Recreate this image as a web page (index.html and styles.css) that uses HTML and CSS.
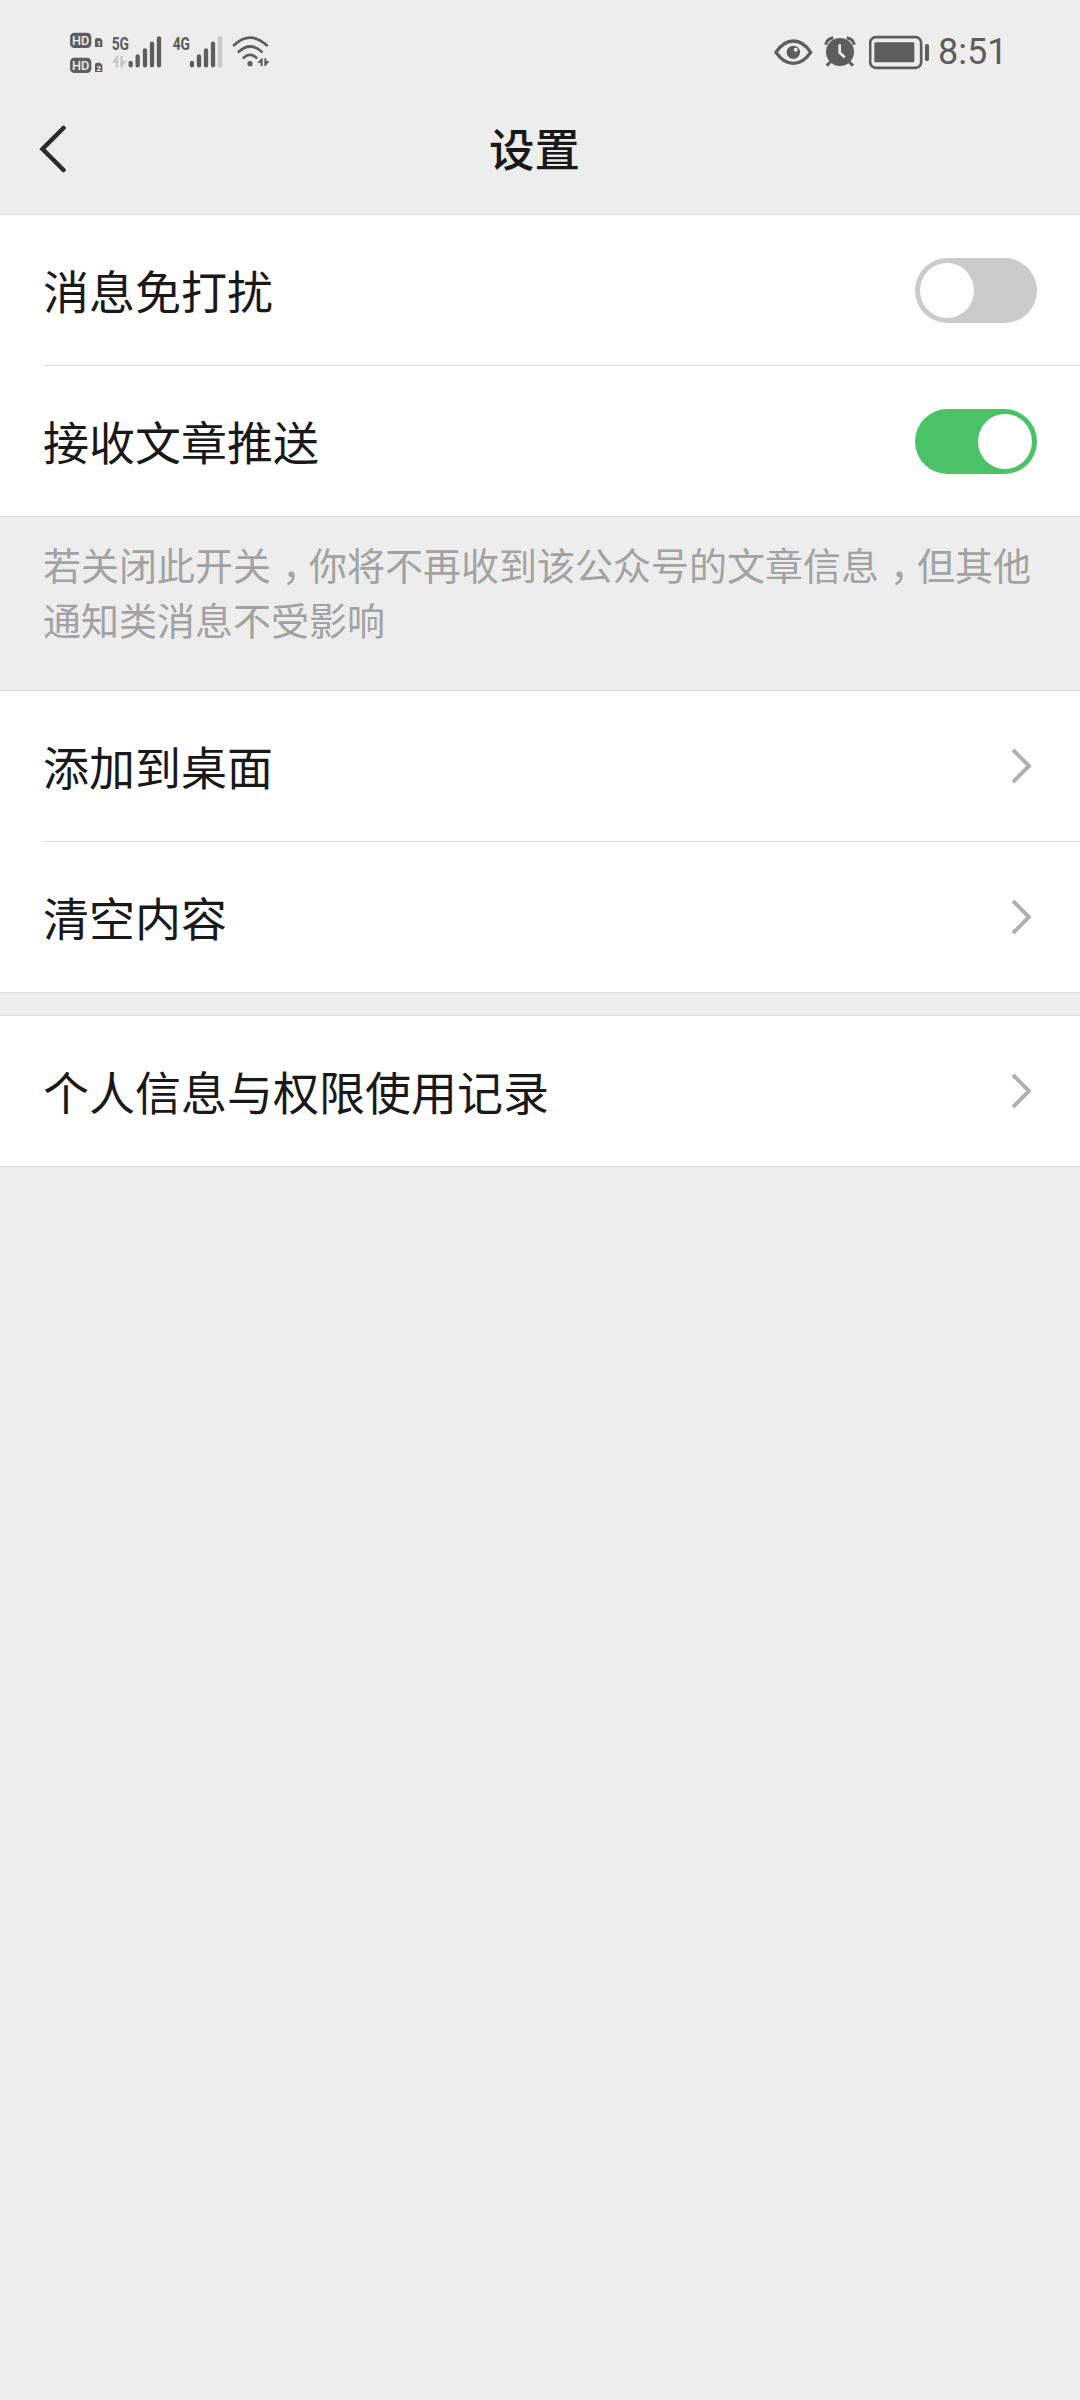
FILE: index.html
```html
<!DOCTYPE html>
<html lang="zh-CN">
<head>
<meta charset="utf-8">
<title>设置</title>
<link rel="stylesheet" href="styles.css">
</head>
<body>
<header class="top">
  <div class="status">
    <div class="status-group">
      <svg class="ic-hd" viewBox="60 0 99 210" aria-hidden="true">
        <rect x="60" y="38" width="64" height="46" rx="13" fill="#5d5d5d"/>
        <text x="66" y="75" class="hd" textLength="52" lengthAdjust="spacingAndGlyphs">HD</text>
        <path d="M135 60q0-6 6-6h9l7 7v20h-22z" fill="#5d5d5d"/>
        <text x="140" y="77" class="sim">1</text>
        <rect x="60" y="113" width="64" height="46" rx="13" fill="#5d5d5d"/>
        <text x="66" y="150" class="hd" textLength="52" lengthAdjust="spacingAndGlyphs">HD</text>
        <path d="M135 134q0-6 6-6h9l7 7v21h-22z" fill="#5d5d5d"/>
        <text x="140" y="152" class="sim">2</text>
      </svg>
      <svg class="ic-5g" viewBox="183 0 153 210" aria-hidden="true">
        <text x="185" y="90" class="net" textLength="52" lengthAdjust="spacingAndGlyphs">5G</text>
        <path d="M205 142h-8v-14h-11l13-20h6zM211 108h8v14h11l-13 20h-6z" class="arrows pale"/>
        <path d="M242 129v7M263 109v27M285 91v45M306 71v65M327 55v81" class="bars"/>
      </svg>
      <svg class="ic-4g" viewBox="366 0 153 210" aria-hidden="true">
        <text x="368" y="90" class="net" textLength="52" lengthAdjust="spacingAndGlyphs">4G</text>
        <path d="M426 129v7M447 109v27M468 91v45M489 71v65" class="bars"/>
        <path d="M510 49v93" class="bars off"/>
      </svg>
      <svg class="ic-wifi" viewBox="546 0 114 210" aria-hidden="true">
        <path d="M552 76Q600 30 650 76M566 95Q600 64 635 95M581 113Q600 96 619 113" class="waves"/>
        <circle cx="600" cy="131" r="8" fill="#5d5d5d"/>
        <path d="M638 138h-6v-9h-10l12-14h4zM643 115h6v8h9l-11 15h-4z" class="arrows"/>
      </svg>
    </div>
    <div class="status-group">
      <svg class="ic-eye" viewBox="42 0 117 210" aria-hidden="true">
        <path d="M48 97Q70 63 100 63T152 97Q130 130 100 130T48 97Z" fill="none" stroke="#5d5d5d" stroke-width="10"/>
        <circle cx="100" cy="97" r="20" fill="#5d5d5d"/>
        <circle cx="107" cy="89" r="6" fill="#ededed"/>
      </svg>
      <svg class="ic-alarm" viewBox="192 0 96 210" aria-hidden="true">
        <circle cx="240" cy="96" r="42" fill="#5d5d5d"/>
        <path d="M211 126l-11 11M268 126l11 11" stroke="#5d5d5d" stroke-width="9"/>
        <path d="M197 74Q200 57 220 53M283 74Q280 57 260 53" fill="none" stroke="#5d5d5d" stroke-width="9"/>
        <path d="M239 73v25l15 14" fill="none" stroke="#ededed" stroke-width="8"/>
      </svg>
      <svg class="ic-battery" viewBox="327 0 183 210" aria-hidden="true">
        <rect x="330.500" y="51.500" width="153" height="92" rx="17" fill="none" stroke="#5d5d5d" stroke-width="8"/>
        <rect x="343" y="67" width="120" height="60" rx="4" fill="#5d5d5d"/>
        <rect x="495" y="72" width="12" height="51" rx="5" fill="#5d5d5d"/>
      </svg>
      <span class="clock">8:51</span>
    </div>
  </div>
  <div class="nav">
    <svg class="back" viewBox="0 0 27 48" aria-label="返回"><path d="M24.500 3L3.500 24L24.500 45"/></svg>
    <h1 class="title">设置</h1>
  </div>
</header>
<main>
  <section class="group">
    <div class="row"><span class="label">消息免打扰</span><span class="switch"></span></div>
    <div class="row"><span class="label">接收文章推送</span><span class="switch on"></span></div>
  </section>
  <p class="hint">若关闭此开关<span class="comma">，</span>你将不再收到该公众号的文章信息<span class="comma">，</span>但其他<br>通知类消息不受影响</p>
  <section class="group">
    <div class="row"><span class="label">添加到桌面</span><svg class="chevron" viewBox="0 0 20 36"><path d="M2 2L18 18L2 34"/></svg></div>
    <div class="row"><span class="label">清空内容</span><svg class="chevron" viewBox="0 0 20 36"><path d="M2 2L18 18L2 34"/></svg></div>
  </section>
  <section class="group spaced">
    <div class="row"><span class="label">个人信息与权限使用记录</span><svg class="chevron" viewBox="0 0 20 36"><path d="M2 2L18 18L2 34"/></svg></div>
  </section>
</main>
</body>
</html>
```
FILE: styles.css
```css
* { box-sizing: border-box; }
body {
  margin: 0;
  min-height: 2400px;
  background: #ededed;
  color: #191919;
  font-family: "Noto Sans CJK SC", sans-serif;
}
svg { display: block; flex: none; }

.top { height: 214px; }
.status {
  height: 100px;
  padding: 20px 75px 0 70px;
  display: flex;
  justify-content: space-between;
}
.status-group { display: flex; align-items: flex-start; }
.status-group svg { height: 70px; }
.ic-hd { width: 33px; margin-right: 8px; }
.ic-5g { width: 51px; margin-right: 10px; }
.ic-4g { width: 51px; margin-right: 9px; }
.ic-wifi { width: 38px; }
.ic-eye { width: 39px; margin-right: 11px; }
.ic-alarm { width: 32px; margin-right: 13px; }
.ic-battery { width: 61px; }
.hd { font: 500 38px Roboto, sans-serif; fill: #ededed; }
.sim { font: 700 22px Roboto, sans-serif; fill: #fff; }
.net { font: 700 53px Roboto, sans-serif; fill: #5d5d5d; }
.bars { fill: none; stroke: #5d5d5d; stroke-width: 13; stroke-linecap: round; }
.bars.off { stroke: #c8c8c8; stroke-linecap: butt; }
.arrows { fill: #5d5d5d; }
.arrows.pale { fill: #c8c8c8; }
.waves { fill: none; stroke: #5d5d5d; stroke-width: 8; stroke-linecap: round; }
.clock {
  width: 67px;
  margin-left: 8px;
  font: 400 36px/65px Roboto, sans-serif;
  color: #5d5d5d;
  white-space: nowrap;
}

.nav { height: 114px; padding: 0 0 17px 39px; display: flex; align-items: center; }
.back { width: 27px; height: 48px; }
.back path { fill: none; stroke: #2b2b2b; stroke-width: 4.500; stroke-linecap: round; }
.title { margin: 0 0 3px 423px; font-size: 45.500px; font-weight: 500; line-height: 68px; }

.group { background: #fff; border-top: 1px solid #dedede; border-bottom: 1px solid #dedede; }
.row {
  height: 150px;
  margin-left: 43px;
  padding: 0 43px 0 0;
  display: flex;
  align-items: center;
  justify-content: space-between;
  font-size: 46px;
  line-height: 68px;
}
.label { padding-bottom: 3px; }
.row + .row { height: 151px; border-top: 1px solid #dedede; }
.switch {
  width: 122px;
  height: 65px;
  padding: 5px;
  display: flex;
  border-radius: 33px;
  background: #cbcbcb;
}
.switch::before { content: ""; width: 54px; height: 55px; border-radius: 50%; background: #fff; }
.switch.on { justify-content: flex-end; background: #4ac366; }
.chevron { width: 20px; height: 36px; margin-right: 6px; }
.chevron path { fill: none; stroke: #b0b0b0; stroke-width: 4; }
.hint {
  height: 173px;
  margin: 0;
  padding: 19px 0 0 43px;
  color: #a2a2a2;
  font-size: 38px;
  line-height: 55px;
  white-space: nowrap;
}
.comma { padding: 0 8px 0 11px; font-feature-settings: "halt"; }
.spaced { margin-top: 22px; }
```
